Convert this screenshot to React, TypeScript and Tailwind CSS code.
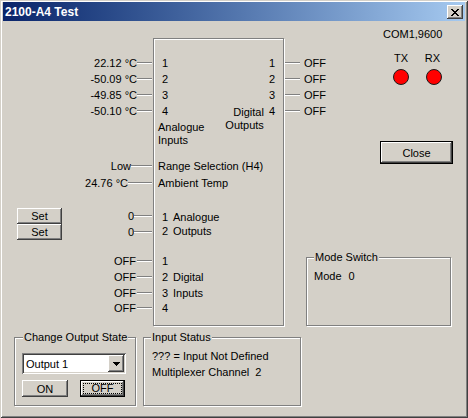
const raised =
  "shadow-[inset_-1px_-1px_0_#404040,inset_1px_1px_0_#ffffff,inset_-2px_-2px_0_#808080,inset_2px_2px_0_#d4d0c8]";
const etched = "border border-[#808080] shadow-[inset_1px_1px_0_#ffffff,1px_1px_0_#ffffff]";

const Line = ({ className = "" }: { className?: string }) => (
  <div className={`box-border h-[2px] border-y border-t-[#808080] border-b-white ${className}`} />
);

type BtnProps = { children: React.ReactNode; className?: string; isDefault?: boolean; focused?: boolean };

const Btn = ({ children, className = "", isDefault, focused }: BtnProps) => (
  <button
    className={`flex items-center justify-center bg-[#d4d0c8] ${className} ${isDefault ? "border border-black" : ""}`}
  >
    <span className={`flex h-full w-full items-center justify-center ${raised}`}>
      {focused ? (
        <span className="box-border flex h-[calc(100%-4px)] w-[calc(100%-4px)] items-center justify-center border border-dotted border-black leading-[11px]">
          {children}
        </span>
      ) : (
        children
      )}
    </span>
  </button>
);

const GroupBox = ({
  label,
  className = "",
  labelPos = "left-[8px]",
  children,
}: {
  label: string;
  className?: string;
  labelPos?: string;
  children?: React.ReactNode;
}) => (
  <div className={`relative box-border ${etched} ${className}`}>
    <span className={`absolute top-[-7px] bg-[#d4d0c8] px-[1px] leading-[13px] ${labelPos}`}>{label}</span>
    {children}
  </div>
);

const LeftRow = ({ text, line, h = "h-[16px]" }: { text: string; line: string; h?: string }) => (
  <div className={`flex items-center justify-end ${h}`}>
    <span className="whitespace-nowrap">{text}</span>
    <Line className={line} />
  </div>
);

const CloseGlyph = () => (
  <svg width="8" height="7" viewBox="0 0 8 7" shapeRendering="crispEdges">
    <path
      fill="#000"
      d="M0 0h2v1H0zM6 0h2v1H6zM1 1h2v1H1zM5 1h2v1H5zM2 2h4v1H2zM3 3h2v1H3zM2 4h4v1H2zM1 5h2v1H1zM5 5h2v1H5zM0 6h2v1H0zM6 6h2v1H6z"
    />
  </svg>
);

const DownArrow = () => (
  <svg width="7" height="4" viewBox="0 0 7 4" shapeRendering="crispEdges">
    <path fill="#000" d="M0 0h7v1H0zM1 1h5v1H1zM2 2h3v1H2zM3 3h1v1H3z" />
  </svg>
);

const LeftColumn = () => (
  <div className="flex w-[149px] flex-col">
    <div className="h-[34px]" />
    <LeftRow text="22.12 °C" line="w-[15px]" />
    <LeftRow text="-50.09 °C" line="w-[15px]" />
    <LeftRow text="-49.85 °C" line="w-[15px]" />
    <LeftRow text="-50.10 °C" line="w-[15px]" />
    <div className="h-[39px]" />
    <LeftRow text="Low" line="w-[21px]" />
    <div className="h-[1px]" />
    <LeftRow text="24.76 °C" line="w-[24px]" />
    <div className="h-[17px]" />
    <div className="flex h-[16px] items-center justify-between">
      <Btn className="ml-[14px] h-[16px] w-[45px]">Set</Btn>
      <div className="flex items-center">
        <span>0</span>
        <Line className="w-[18px]" />
      </div>
    </div>
    <div className="flex h-[16px] items-center justify-between">
      <Btn className="ml-[14px] h-[16px] w-[45px]">Set</Btn>
      <div className="flex items-center">
        <span>0</span>
        <Line className="w-[18px]" />
      </div>
    </div>
    <div className="h-[13px]" />
    <LeftRow text="OFF" line="ml-[1px] w-[15px]" />
    <LeftRow text="OFF" line="ml-[1px] w-[15px]" />
    <LeftRow text="OFF" line="ml-[1px] w-[15px]" h="h-[15px]" />
    <LeftRow text="OFF" line="ml-[1px] w-[15px]" />
  </div>
);

const CentralBox = () => (
  <div className={`ml-[1px] mt-[17px] box-border flex h-[288px] w-[131px] flex-col pt-[16px] ${etched}`}>
    <div className="flex justify-between pl-[4px] pr-[8px]">
      <div className="flex flex-col">
        {["1", "2", "3", "4"].map((n) => (
          <div key={n} className="ml-[4px] h-[16px]">
            {n}
          </div>
        ))}
        <div className="mt-[2px] leading-[13px]">
          Analogue
          <br />
          Inputs
        </div>
      </div>
      <div className="flex items-start gap-[5px]">
        <div className="pt-[51px] text-right leading-[13px]">
          Digital
          <br />
          Outputs
        </div>
        <div className="flex flex-col text-right">
          {["1", "2", "3", "4"].map((n) => (
            <div key={n} className="h-[16px]">
              {n}
            </div>
          ))}
        </div>
      </div>
    </div>
    <div className="mt-[11px] h-[16px] whitespace-nowrap pl-[4px]">Range Selection (H4)</div>
    <div className="mt-[1px] h-[16px] pl-[4px]">Ambient Temp</div>
    <div className="mt-[19px] flex h-[14px] items-center pl-[8px]">
      <span className="w-[11px]">1</span>
      <span>Analogue</span>
    </div>
    <div className="flex h-[14px] items-center pl-[8px]">
      <span className="w-[11px]">2</span>
      <span>Outputs</span>
    </div>
    <div className="mt-[15px] flex flex-col pl-[8px]">
      <div className="flex h-[16px] items-center">
        <span className="w-[11px]">1</span>
      </div>
      <div className="flex h-[16px] items-center">
        <span className="w-[11px]">2</span>
        <span>Digital</span>
      </div>
      <div className="flex h-[15px] items-center">
        <span className="w-[11px]">3</span>
        <span>Inputs</span>
      </div>
      <div className="flex h-[16px] items-center">
        <span className="w-[11px]">4</span>
      </div>
    </div>
  </div>
);

const Led = () => <div className="mt-[3px] h-[16px] w-[16px] rounded-full border border-[#1a1a1a] bg-[#ff0000]" />;

const RightSection = () => (
  <div className="flex flex-1 flex-col">
    <div className="flex items-start">
      <div className="mt-[34px] flex w-[96px] flex-col">
        {[1, 2, 3, 4].map((n) => (
          <div key={n} className="flex h-[16px] items-center">
            <Line className="ml-[1px] w-[15px]" />
            <span className="ml-[4px]">OFF</span>
          </div>
        ))}
      </div>
      <div className="mt-[5px] flex flex-col">
        <div className="h-[16px] pl-[3px]">COM1,9600</div>
        <div className="mt-[8px] flex">
          <div className="ml-[13px] flex w-[16px] flex-col items-center">
            <span className="h-[16px]">TX</span>
            <Led />
          </div>
          <div className="ml-[17px] flex w-[16px] flex-col items-center">
            <span className="mr-[3px] h-[16px]">RX</span>
            <Led />
          </div>
        </div>
        <Btn isDefault className="mt-[56px] h-[23px] w-[73px]">
          Close
        </Btn>
      </div>
    </div>
    <GroupBox label="Mode Switch" labelPos="left-[7px]" className="ml-[22px] mt-[93px] h-[69px] w-[145px]">
      <div className="flex pl-[7px] pt-[10px]">
        <span>Mode</span>
        <span className="ml-[7px]">0</span>
      </div>
    </GroupBox>
  </div>
);

const BottomSection = () => (
  <div className="mt-[11px] flex items-start pl-[11px]">
    <GroupBox label="Change Output State" className="h-[69px] w-[122px]">
      <div className="flex flex-col pl-[7px] pt-[15px]">
        <div className="box-border flex h-[21px] w-[104px] items-center bg-white shadow-[inset_1px_1px_0_#808080,inset_-1px_-1px_0_#ffffff,inset_2px_2px_0_#404040,inset_-2px_-2px_0_#d4d0c8]">
          <span className="flex-1 pl-[4px]">Output 1</span>
          <span className={`mr-[2px] flex h-[17px] w-[16px] items-center justify-center bg-[#d4d0c8] ${raised}`}>
            <DownArrow />
          </span>
        </div>
        <div className="mt-[6px] flex gap-[12px]">
          <Btn className="h-[17px] w-[46px]">ON</Btn>
          <Btn isDefault focused className="h-[17px] w-[45px]">
            OFF
          </Btn>
        </div>
      </div>
    </GroupBox>
    <GroupBox label="Input Status" labelPos="left-[7px]" className="ml-[7px] h-[69px] w-[158px]">
      <div className="flex flex-col pl-[8px] pt-[10px]">
        <div className="h-[16px] whitespace-nowrap">??? = Input Not Defined</div>
        <div className="flex h-[16px] whitespace-nowrap">
          <span>Multiplexer Channel</span>
          <span className="ml-[6px]">2</span>
        </div>
      </div>
    </GroupBox>
  </div>
);

export default function App() {
  return (
    <div className="box-border flex h-[418px] w-[468px] flex-col bg-[#d4d0c8] px-[3px] pb-[3px] pt-[2px] font-['Liberation_Sans',Arial,sans-serif] text-[11px] leading-[16px] text-black shadow-[inset_1px_1px_0_#d4d0c8,inset_-1px_-1px_0_#404040,inset_2px_2px_0_#ffffff,inset_-2px_-2px_0_#808080]">
      <div className="flex h-[19px] items-center bg-linear-to-r from-[#0a246a] to-[#a6caf0]">
        <span className="pl-[2px] text-[12px] font-bold text-white">2100-A4 Test</span>
        <span className={`ml-auto mr-[2px] mt-[1px] flex h-[14px] w-[16px] items-center justify-center bg-[#d4d0c8] ${raised}`}>
          <CloseGlyph />
        </span>
      </div>
      <div className="flex flex-1 flex-col">
        <div className="flex items-start">
          <LeftColumn />
          <CentralBox />
          <RightSection />
        </div>
        <BottomSection />
      </div>
    </div>
  );
}
